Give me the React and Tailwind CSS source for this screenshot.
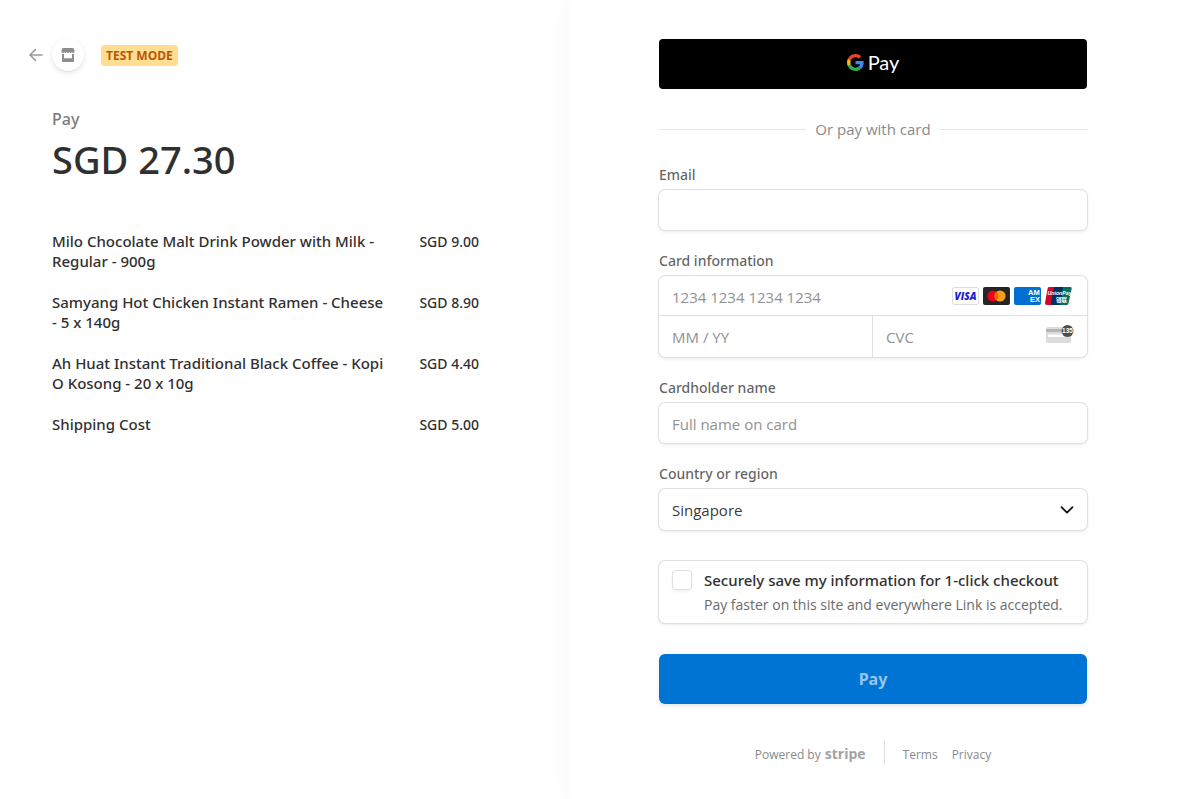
import React from "react";

const items = [
  { name: "Milo Chocolate Malt Drink Powder with Milk - Regular - 900g", price: "SGD 9.00" },
  { name: "Samyang Hot Chicken Instant Ramen - Cheese - 5 x 140g", price: "SGD 8.90" },
  { name: "Ah Huat Instant Traditional Black Coffee - Kopi O Kosong - 20 x 10g", price: "SGD 4.40" },
  { name: "Shipping Cost", price: "SGD 5.00" },
];

const box = "rounded-md bg-white shadow-[0_0_0_1px_#e0e0e0,0_2px_4px_0_rgba(0,0,0,0.07),0_1px_2px_0_rgba(0,0,0,0.05)]";
const label = "mb-[5px] block font-['Noto_Sans',sans-serif] text-sm leading-5 font-medium text-[#1a1a1a]/70";
const field = "w-full bg-transparent px-[13px] pt-0.5 text-[15px] text-[#1a1a1a]/90 outline-none placeholder:text-[#929292]";

function ArrowIcon() {
  return (
    <svg width="14" height="14" viewBox="0 0 14 14" fill="none" stroke="#9a9a9a" strokeWidth="1.5" strokeLinecap="round" strokeLinejoin="round" aria-hidden="true">
      <path d="M13 7H1.3M6.4 1.6 1 7l5.400 5.400" />
    </svg>
  );
}

function StoreIcon() {
  return (
    <svg width="14" height="14" viewBox="0 0 14 14" fill="#8d8d8d" aria-hidden="true">
      <path d="M1.600 0h10.800l1.100 2.400v1.200c0 .8-.6 1.400-1.400 1.400-.7 0-1.200-.4-1.300-.9-.2.500-.7.900-1.300.9s-1-.4-1.250-.9c-.2.500-.65.900-1.250.9s-1.050-.4-1.250-.9c-.2.500-.65.900-1.250.9s-1.100-.4-1.300-.9c-.2.500-.6.900-1.300.9C1.100 5 .5 4.400.5 3.600V2.400Z" />
      <path d="M1 6h2v4.200h8V6h2v7.300c0 .4-.3.700-.7.700H1.700c-.4 0-.7-.3-.7-.7Z" />
    </svg>
  );
}

function GoogleMark() {
  return (
    <svg width="17" height="17" viewBox="0 0 48 48" aria-hidden="true">
      <path fill="#EA4335" d="M24 9.500c3.540 0 6.710 1.220 9.210 3.600l6.850-6.850C35.900 2.380 30.470 0 24 0 14.620 0 6.510 5.380 2.560 13.220l7.980 6.190C12.430 13.720 17.740 9.500 24 9.500z" />
      <path fill="#4285F4" d="M46.980 24.550c0-1.570-.15-3.090-.38-4.550H24v9.020h12.940c-.58 2.960-2.260 5.480-4.780 7.180l7.730 6c4.510-4.180 7.090-10.360 7.090-17.650z" />
      <path fill="#FBBC05" d="M10.530 28.590c-.48-1.450-.76-2.990-.76-4.590s.27-3.140.76-4.590l-7.980-6.190C.920 16.460 0 20.120 0 24c0 3.880.92 7.540 2.560 10.780l7.970-6.190z" />
      <path fill="#34A853" d="M24 48c6.480 0 11.930-2.130 15.890-5.810l-7.730-6c-2.150 1.450-4.920 2.300-8.160 2.300-6.260 0-11.570-4.220-13.470-9.910l-7.980 6.190C6.510 42.620 14.620 48 24 48z" />
    </svg>
  );
}

function Visa() {
  return (
    <svg width="27" height="18" viewBox="0 0 27 18" role="img" aria-label="Visa">
      <rect x=".5" y=".5" width="26" height="17" rx="1.500" fill="#fff" stroke="#dedede" />
      <text x="13.500" y="12.700" textAnchor="middle" fontFamily="'Open Sans', sans-serif" fontSize="10" fontWeight="800" fontStyle="italic" fill="#1a1fd0">VISA</text>
    </svg>
  );
}

function Mastercard() {
  return (
    <svg width="27" height="18" viewBox="0 0 27 18" role="img" aria-label="Mastercard">
      <rect width="27" height="18" rx="2" fill="#252525" />
      <circle cx="10" cy="9" r="5.600" fill="#eb001b" />
      <circle cx="17" cy="9" r="5.600" fill="#f79e1b" />
      <path d="M13.500 4.630a5.600 5.600 0 0 1 0 8.740 5.600 5.600 0 0 1 0-8.740Z" fill="#ff5f00" />
    </svg>
  );
}

function Amex() {
  return (
    <svg width="27" height="18" viewBox="0 0 27 18" role="img" aria-label="American Express">
      <rect width="27" height="18" rx="2" fill="#016fd0" />
      <g fontFamily="'Liberation Sans', sans-serif" fontSize="7.500" fontWeight="700" fill="#fff">
        <text x="14" y="8.400">AM</text>
        <text x="16" y="15.200">EX</text>
      </g>
    </svg>
  );
}

function UnionPay() {
  return (
    <svg width="27" height="18" viewBox="0 0 27 18" role="img" aria-label="UnionPay">
      <path d="M4.500 0H12L8.500 18H2A2 2 0 0 1 .1 15.600L2.600 1.600C2.800.6 3.500 0 4.500 0Z" fill="#d10429" />
      <path d="M10.500 0H19l-3.500 18H7.500A1.600 1.600 0 0 1 6 16L8.800 1.500C9 .5 9.500 0 10.500 0Z" fill="#022e64" />
      <path d="M18 0h7a1.600 1.600 0 0 1 1.600 2L23.500 16.200c-.3 1.200-1 1.800-2 1.800H14.500Z" fill="#076f5b" />
      <g fontWeight="700" fill="#fff">
        <text x="2.600" y="8" fontSize="5.200" fontFamily="'Liberation Sans', sans-serif" fontStyle="italic">UnionPay</text>
        <text x="11" y="14.600" fontSize="5.500" fontFamily="'Noto Sans CJK SC', sans-serif">银联</text>
      </g>
    </svg>
  );
}

function CvcIcon() {
  return (
    <svg width="28" height="24" viewBox="0 0 28 24" aria-hidden="true">
      <rect y="2" width="25" height="16" rx="2" fill="#dcdcdc" />
      <rect y="4" width="25" height="3" fill="#b5b5b5" />
      <rect x="2" y="9.500" width="16" height="2.500" fill="#fff" />
      <circle cx="21.500" cy="6" r="6" fill="#4d4d4d" />
      <text x="21.500" y="8.400" textAnchor="middle" fontFamily="'Liberation Sans', sans-serif" fontSize="6.500" fontWeight="700" fill="#fff">135</text>
    </svg>
  );
}

function Summary() {
  return (
    <section className="pt-[39px] pr-[90px] pl-[29px]">
      <header className="flex items-center">
        <a href="#back" aria-label="Back" className="mr-[9px]"><ArrowIcon /></a>
        <span className="flex size-8 items-center justify-center rounded-full bg-white shadow-[0_2px_5px_rgba(0,0,0,0.1),0_1px_1px_rgba(0,0,0,0.06)]">
          <StoreIcon />
        </span>
        <span className="ml-[17px] rounded bg-[#ffde92] px-[5px] text-xs leading-[21px] font-bold text-[#bb5504]">TEST MODE</span>
      </header>
      <div className="pl-[23px] font-['Noto_Sans',sans-serif]">
        <h1 className="mt-9 text-base leading-6 font-medium text-[#7a7a7a]">Pay</h1>
        <p className="mt-[3px] text-[38px] leading-[50px] font-medium text-[#303030]">SGD 27.30</p>
        <ul className="mt-[47px] flex flex-col gap-[21px] text-[15px] leading-5 font-medium text-[#303030]">
          {items.map((item) => (
            <li key={item.name} className="flex items-baseline justify-between gap-7">
              <span className="flex-1">{item.name}</span>
              <span className="text-sm leading-5 whitespace-nowrap">{item.price}</span>
            </li>
          ))}
        </ul>
      </div>
    </section>
  );
}

function Payment() {
  return (
    <section className="bg-white pt-[39px] pr-[100px] pb-8 pl-[90px] shadow-[0_0_30px_rgba(0,0,0,0.04)]">
      <form onSubmit={(e) => e.preventDefault()}>
        <button type="button" className="flex h-[50px] w-full items-center justify-center gap-1 rounded bg-black pb-1 text-white">
          <GoogleMark />
          <span className="font-['Lato',sans-serif] text-xl leading-6">Pay</span>
        </button>
        <div className="mt-[30px] flex items-center gap-[9px] text-[15px] leading-5 text-[#8a8a8a]">
          <span className="h-px flex-1 bg-[#e6e6e6]" />
          Or pay with card
          <span className="h-px flex-1 bg-[#e6e6e6]" />
        </div>

        <div className="mt-[26px] flex flex-col gap-[21px]">
          <div>
            <label htmlFor="email" className={label}>Email</label>
            <div className={box}><input id="email" type="email" className={field + " block h-10"} /></div>
          </div>

          <fieldset>
            <legend className={label}>Card information</legend>
            <div className={box}>
              <div className="flex h-10 items-center border-b border-[#e0e0e0] pr-[15px]">
                <input aria-label="Card number" placeholder="1234 1234 1234 1234" className={field + " h-full min-w-0 flex-1"} />
                <div className="flex shrink-0 gap-1">
                  <Visa />
                  <Mastercard />
                  <Amex />
                  <UnionPay />
                </div>
              </div>
              <div className="grid h-[41px] grid-cols-2">
                <input aria-label="Expiration" placeholder="MM / YY" className={field + " border-r border-[#e0e0e0]"} />
                <div className="flex pr-[13px]">
                  <input aria-label="CVC" placeholder="CVC" className={field + " h-10 min-w-0 flex-1"} />
                  <span className="flex items-center"><CvcIcon /></span>
                </div>
              </div>
            </div>
          </fieldset>

          <div>
            <label htmlFor="name" className={label}>Cardholder name</label>
            <div className={box}><input id="name" placeholder="Full name on card" className={field + " block h-10"} /></div>
          </div>

          <div>
            <label htmlFor="country" className={label}>Country or region</label>
            <div className={box + " grid items-center"}>
              <select id="country" className={field + " col-start-1 row-start-1 h-[41px] appearance-none"}>
                <option>Singapore</option>
              </select>
              <svg className="pointer-events-none col-start-1 row-start-1 mr-[13px] justify-self-end" width="14" height="8" viewBox="0 0 14 8" fill="none" stroke="#111" strokeWidth="1.800" strokeLinecap="round" strokeLinejoin="round" aria-hidden="true">
                <path d="m1.500 1.200 5.500 5.500 5.500-5.500" />
              </svg>
            </div>
          </div>
        </div>

        <div className={box + " mt-[31px] flex gap-[13px] px-[14px] pt-[9px] pb-[7px]"}>
          <input id="save" type="checkbox" aria-describedby="save-note" className="mt-px ml-0 size-[18px] shrink-0 appearance-none rounded-[3px] bg-white shadow-[0_0_0_1px_#e0e0e0,0_2px_4px_rgba(0,0,0,0.07)] checked:bg-[#0074d4]" />
          <div>
            <label htmlFor="save" className="block font-['Noto_Sans',sans-serif] text-[15px] leading-5 font-medium text-[#303030]">Securely save my information for 1-click checkout</label>
            <p id="save-note" className="mt-1 text-sm leading-[22px] text-[#6b6b6b]">Pay faster on this site and everywhere Link is accepted.</p>
          </div>
        </div>

        <button type="submit" className="mt-[31px] h-[50px] w-full rounded-md bg-[#0074d4] font-['Noto_Sans',sans-serif] text-base font-bold text-white/60 shadow-[0_2px_4px_rgba(0,0,0,0.1)]">Pay</button>
      </form>

      <footer className="mt-[37px] flex h-6 items-center justify-center text-xs leading-5 text-[#8a8a8a]">
        <a href="#stripe" className="flex items-baseline gap-1 pt-0.5">
          Powered by <span className="text-sm leading-5 font-bold text-[#a3a3a3]">stripe</span>
        </a>
        <span className="mx-[18px] h-6 w-px bg-[#e0e0e0]" />
        <nav className="flex gap-[14px] pt-[3px]">
          <a href="#terms">Terms</a>
          <a href="#privacy">Privacy</a>
        </nav>
      </footer>
    </section>
  );
}

export default function App() {
  return (
    <main className="grid min-h-screen grid-cols-[569fr_618fr] overflow-hidden bg-white font-['Open_Sans','Noto_Sans',sans-serif]">
      <Summary />
      <Payment />
    </main>
  );
}
